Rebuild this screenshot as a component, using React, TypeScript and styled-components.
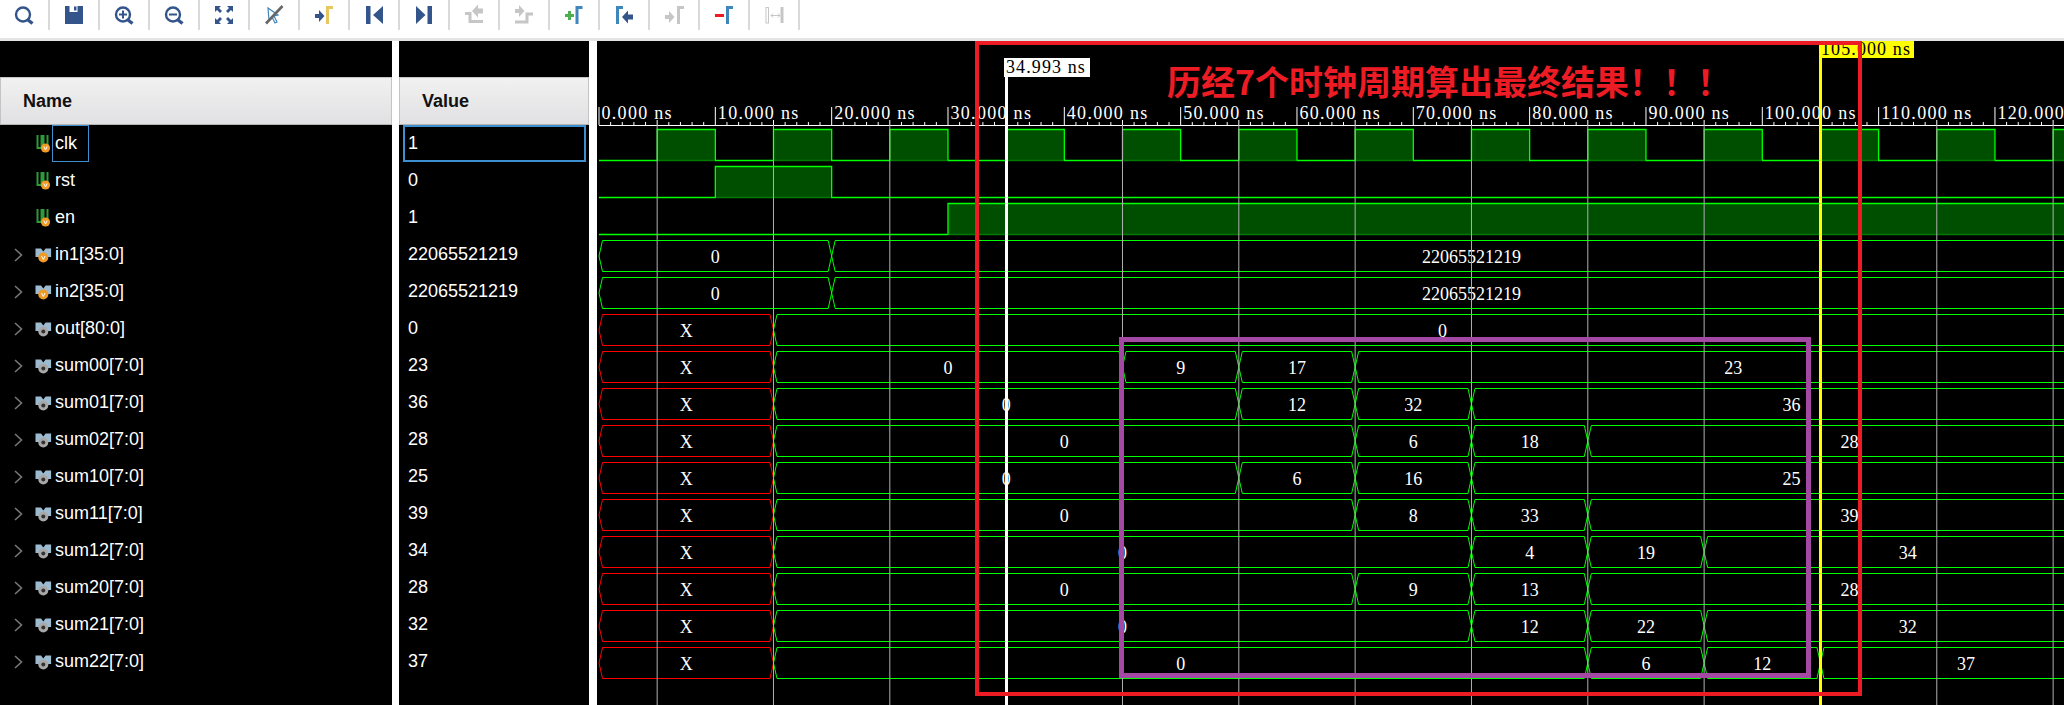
import React from "react";
import styled, { createGlobalStyle } from "styled-components";

const GlobalStyle = createGlobalStyle`
  html, body { margin: 0; padding: 0; background: #000; }
  body { font-family: "Liberation Sans", Arial, sans-serif; }
`;

// waveform geometry, all in page pixels
const PANEL_X = 597;
const PANEL_Y = 41;
const PANEL_W = 1467;
const PANEL_H = 664;
const X0 = 599;
const NS = 11.633;
const ROW_H = 37;
const HIGH_Y = 129.5;
const LOW_Y = 160.5;
const END = 130;
const EDGE = 3.5;

const tx = (t: number) => X0 + t * NS;

type Seg = [number, string];

type Signal = {
  name: string;
  value: string;
  kind: "bit" | "bus" | "grey";
  bits?: [number, number][];
  segs?: Seg[];
};

const clockHighs: [number, number][] = Array.from({ length: 13 }, (_, k) => [5 + k * 10, 10 + k * 10]);

const signals: Signal[] = [
  { name: "clk", value: "1", kind: "bit", bits: clockHighs },
  { name: "rst", value: "0", kind: "bit", bits: [[10, 20]] },
  { name: "en", value: "1", kind: "bit", bits: [[30, END]] },
  { name: "in1[35:0]", value: "22065521219", kind: "bus", segs: [[0, "0"], [20, "22065521219"]] },
  { name: "in2[35:0]", value: "22065521219", kind: "bus", segs: [[0, "0"], [20, "22065521219"]] },
  { name: "out[80:0]", value: "0", kind: "grey", segs: [[0, "X"], [15, "0"]] },
  { name: "sum00[7:0]", value: "23", kind: "grey", segs: [[0, "X"], [15, "0"], [45, "9"], [55, "17"], [65, "23"]] },
  { name: "sum01[7:0]", value: "36", kind: "grey", segs: [[0, "X"], [15, "0"], [55, "12"], [65, "32"], [75, "36"]] },
  { name: "sum02[7:0]", value: "28", kind: "grey", segs: [[0, "X"], [15, "0"], [65, "6"], [75, "18"], [85, "28"]] },
  { name: "sum10[7:0]", value: "25", kind: "grey", segs: [[0, "X"], [15, "0"], [55, "6"], [65, "16"], [75, "25"]] },
  { name: "sum11[7:0]", value: "39", kind: "grey", segs: [[0, "X"], [15, "0"], [65, "8"], [75, "33"], [85, "39"]] },
  { name: "sum12[7:0]", value: "34", kind: "grey", segs: [[0, "X"], [15, "0"], [75, "4"], [85, "19"], [95, "34"]] },
  { name: "sum20[7:0]", value: "28", kind: "grey", segs: [[0, "X"], [15, "0"], [65, "9"], [75, "13"], [85, "28"]] },
  { name: "sum21[7:0]", value: "32", kind: "grey", segs: [[0, "X"], [15, "0"], [75, "12"], [85, "22"], [95, "32"]] },
  { name: "sum22[7:0]", value: "37", kind: "grey", segs: [[0, "X"], [15, "0"], [85, "6"], [95, "12"], [105, "37"]] },
];

const Page = styled.div`
  width: 2064px;
  height: 705px;
  display: flex;
  flex-direction: column;
  overflow: hidden;
  background: #fff;
`;

const Toolbar = styled.div`
  height: 41px;
  box-sizing: border-box;
  display: flex;
  align-items: flex-start;
  background: #fff;
  border-bottom: 3px solid #e4e4e4;
`;

const ToolButton = styled.div`
  width: 50px;
  height: 30px;
  box-sizing: border-box;
  border-right: 2px solid #d9d9d9;
  svg {
    display: block;
  }
`;

const Body = styled.div`
  flex: 1;
  display: flex;
  min-height: 0;
`;

const Column = styled.div<{ $width: number; $gap: number }>`
  width: ${(p) => p.$width}px;
  margin-right: ${(p) => p.$gap}px;
  padding-top: 36px;
  box-sizing: border-box;
  background: #000;
  color: #fff;
  font-size: 18px;
`;

const HeaderCell = styled.div<{ $indent: number }>`
  height: 48px;
  box-sizing: border-box;
  padding-left: ${(p) => p.$indent}px;
  display: flex;
  align-items: center;
  font-weight: bold;
  color: #111;
  background: linear-gradient(#f1f1f1, #e1e1e3);
  border: 1px solid #c4c4c4;
  border-bottom-color: #b4b4b4;
`;

const NameRow = styled.div`
  height: ${ROW_H}px;
  display: grid;
  grid-template-columns: 35px 17px auto;
  justify-content: start;
  align-items: center;
`;

const Chevron = styled.svg`
  margin-left: 14px;
`;

const NameLabel = styled.div<{ $selected?: boolean }>`
  height: ${ROW_H}px;
  box-sizing: border-box;
  padding: 0 11px 0 2px;
  display: flex;
  align-items: center;
  border: 1px solid ${(p) => (p.$selected ? "#3d8fd0" : "transparent")};
`;

const ValueRow = styled.div<{ $selected?: boolean }>`
  height: ${ROW_H}px;
  width: 183px;
  margin-left: 4px;
  box-sizing: border-box;
  padding-left: 3px;
  display: flex;
  align-items: center;
  border: 2px solid ${(p) => (p.$selected ? "#3d8fd0" : "transparent")};
`;

const WavePanel = styled.div`
  position: relative;
  flex: 1;
  background: #000;
  overflow: hidden;
  svg {
    display: block;
  }
`;

const SerifText = styled.text`
  font-family: "Liberation Serif", "Times New Roman", serif;
  font-size: 18px;
  fill: #fff;
`;

const RulerText = styled(SerifText)`
  letter-spacing: 1.3px;
`;

const CursorLine = styled.div<{ $x: number; $top: number; $color: string }>`
  position: absolute;
  left: ${(p) => p.$x - PANEL_X}px;
  top: ${(p) => p.$top - PANEL_Y}px;
  bottom: 0;
  width: 3px;
  background: ${(p) => p.$color};
`;

const CursorTag = styled.div<{ $x: number; $y: number; $w: number; $h: number; $color: string }>`
  position: absolute;
  left: ${(p) => p.$x - PANEL_X}px;
  top: ${(p) => p.$y - PANEL_Y}px;
  width: ${(p) => p.$w}px;
  height: ${(p) => p.$h}px;
  padding-left: 2px;
  box-sizing: border-box;
  background: ${(p) => p.$color};
  color: #000;
  font: 18px/${(p) => p.$h}px "Liberation Serif", serif;
  letter-spacing: 1.1px;
  white-space: nowrap;
`;

const MarkBox = styled.div<{ $l: number; $t: number; $r: number; $b: number; $color: string; $line: number }>`
  position: absolute;
  left: ${(p) => p.$l - PANEL_X}px;
  top: ${(p) => p.$t - PANEL_Y}px;
  width: ${(p) => p.$r - p.$l}px;
  height: ${(p) => p.$b - p.$t}px;
  box-sizing: border-box;
  border: ${(p) => p.$line}px solid ${(p) => p.$color};
`;

const Callout = styled.div`
  position: absolute;
  left: ${1167 - PANEL_X}px;
  top: ${63 - PANEL_Y}px;
  color: #ed1c24;
  font: bold 34px/36px "Noto Sans CJK SC", sans-serif;
  white-space: nowrap;
`;

const BLUE = "#34558b";
const MARK = "#3f86bd";
const GREY = "#c6c6c6";

function Marker({ x, color }: { x: number; color: string }) {
  return <path d={`M${x + 1.5} 24V7.5H${x + 7}`} fill="none" stroke={color} strokeWidth={3} />;
}

function ArrowRight({ x, color, y = 16 }: { x: number; color: string; y?: number }) {
  return <path d={`M${x} ${y - 2}h4v-4l5.5 6-5.5 6v-4h-4z`} fill={color} />;
}

function ArrowLeft({ x, color, y = 17 }: { x: number; color: string; y?: number }) {
  return <path d={`M${x + 11} ${y - 2.5}h-5v-4l-6 6.5 6 6.5v-4h5z`} fill={color} />;
}

function Lens({ sign }: { sign?: "plus" | "minus" }) {
  return (
    <>
      <circle cx={23} cy={14.5} r={7} fill="none" stroke={BLUE} strokeWidth={2.4} />
      <path d="M28 20l4.5 3.5" stroke={BLUE} strokeWidth={3.4} />
      {sign && <path d="M19 14.5h8" stroke={BLUE} strokeWidth={2} />}
      {sign === "plus" && <path d="M23 10.5v8" stroke={BLUE} strokeWidth={2} />}
    </>
  );
}

const toolIcons: React.ReactNode[] = [
  <Lens key="search" />,
  <path key="save" d="M15 6h4.5v6h8V6H33v18H15zM24 6.5h2.5v4H24z" fill={BLUE} fillRule="evenodd" />,
  <Lens key="in" sign="plus" />,
  <Lens key="out" sign="minus" />,
  <g key="fit" fill={BLUE}>
    <path d="M15 6h6l-2 2 3 3-2 2-3-3-2 2zM33 6h-6l2 2-3 3 2 2 3-3 2 2zM15 24h6l-2-2 3-3-2-2-3 3-2-2zM33 24h-6l2-2-3-3 2-2 3 3 2-2z" />
  </g>,
  <g key="cursor">
    <path d="M18 8l10 7-4 1 3 6-2 1-3-6-3 3z" fill="#fff" stroke={MARK} strokeWidth={1.2} />
    <path d="M32.5 6L16 23.5" stroke="#666" strokeWidth={2.6} />
  </g>,
  <g key="goto">
    <ArrowRight x={15} color={BLUE} />
    <Marker x={26} color="#e6c860" />
  </g>,
  <path key="prev" d="M16 6h4.5v18H16zM33 6v18l-10-9z" fill={BLUE} />,
  <path key="next" d="M16 6v18l9.5-9zM27.5 6H32v18h-4.5z" fill={BLUE} />,
  <g key="ptrans">
    <path d="M15 13.5h5v8h13" fill="none" stroke={GREY} strokeWidth={3} />
    <ArrowLeft x={22} color={GREY} y={11} />
  </g>,
  <g key="ntrans">
    <path d="M15 22h12v-8h6" fill="none" stroke={GREY} strokeWidth={3} />
    <ArrowRight x={15} color={GREY} y={11} />
  </g>,
  <g key="add">
    <path d="M15 15.5h9M19.5 11v9" stroke="#4caf50" strokeWidth={3} />
    <Marker x={25.5} color={MARK} />
  </g>,
  <g key="pmark">
    <Marker x={16} color={MARK} />
    <ArrowLeft x={22} color={BLUE} />
  </g>,
  <g key="nmark">
    <ArrowRight x={15} color={GREY} y={17} />
    <Marker x={27} color={GREY} />
  </g>,
  <g key="del">
    <path d="M15 15.5h9" stroke="#ed1c24" strokeWidth={3} />
    <Marker x={26} color={MARK} />
  </g>,
  <g key="swap">
    <rect x={16} y={7.5} width={2.5} height={15.5} fill="none" stroke={GREY} strokeWidth={1} />
    <path d="M21 15.5h9M23 13.5l-2 2 2 2M28 13.5l2 2-2 2" fill="none" stroke={GREY} strokeWidth={1} />
    <path d="M30.5 7h3v16h-3z" fill={GREY} />
  </g>,
];

function ScalarIcon() {
  return (
    <svg width={17} height={20} viewBox="0 0 17 20">
      <path d="M2.5 1v13h4V1M8.5 1v10h4V1" fill="none" stroke="#2e9a3a" strokeWidth={2} />
      <circle cx={10.5} cy={14} r={4.6} fill="#f19a26" />
      <path d="M8.8 12.5l1.7 3.5 1.7-3.5" fill="none" stroke="#fff" strokeWidth={1} />
    </svg>
  );
}

function BusIcon({ grey }: { grey: boolean }) {
  return (
    <svg width={17} height={16} viewBox="0 0 17 16">
      <path d="M0.5 1.5h5.5l2.3 3 2.3-3h5.5v8.5h-5.5v1h-4.6v-1h-5.5z" fill="#9dbbd0" />
      <circle cx={8.3} cy={10.5} r={5} fill={grey ? "#a8a8a8" : "#f19a26"} />
      {grey ? (
        <circle cx={8.3} cy={10.5} r={2} fill="#333" />
      ) : (
        <path d="M6.5 9l1.8 3.6 1.8-3.6" fill="none" stroke="#fff" strokeWidth={1} />
      )}
    </svg>
  );
}

function BitWave({ row, bits }: { row: number; bits: [number, number][] }) {
  const high = HIGH_Y + row * ROW_H;
  const low = LOW_Y + row * ROW_H;
  let d = `M${X0} ${low}`;
  bits.forEach(([a, b]) => {
    d += `H${tx(a)}V${high}H${tx(b)}V${low}`;
  });
  d += `H${tx(END)}`;
  return (
    <>
      {bits.map(([a, b]) => (
        <rect key={a} x={tx(a)} y={high} width={tx(b) - tx(a)} height={low - high} fill="#004f00" />
      ))}
      <path d={d} fill="none" stroke="#00ff00" strokeWidth={1.3} />
      {bits.map(([a, b]) => (
        <path key={a} d={`M${tx(a) + 1} ${low}H${tx(b) - 1}`} stroke="#007a00" strokeWidth={1.3} />
      ))}
    </>
  );
}

function BusWave({ row, segs }: { row: number; segs: Seg[] }) {
  const top = HIGH_Y + row * ROW_H;
  const bottom = LOW_Y + row * ROW_H;
  const mid = (top + bottom) / 2;
  return (
    <>
      {segs.map(([start, label], i) => {
        const stop = i + 1 < segs.length ? segs[i + 1][0] : END;
        const a = tx(start);
        const b = tx(stop);
        const points = `${a},${mid} ${a + EDGE},${top} ${b - EDGE},${top} ${b},${mid} ${b - EDGE},${bottom} ${a + EDGE},${bottom}`;
        return (
          <polygon key={start} points={points} fill="none" stroke={label === "X" ? "#ff0000" : "#00ff00"} strokeWidth={1} />
        );
      })}
      {segs.map(([start, label], i) => {
        const stop = i + 1 < segs.length ? segs[i + 1][0] : END;
        return (
          <SerifText key={start} x={tx((start + stop) / 2)} y={top + 22.5} textAnchor="middle">
            {label}
          </SerifText>
        );
      })}
    </>
  );
}

function Ruler() {
  let minor = "";
  for (let t = 0; t <= 125; t += 1) {
    const h = t % 10 === 0 ? 18 : t % 5 === 0 ? 5 : 3;
    minor += `M${tx(t)} 125v-${h}`;
  }
  return (
    <>
      <path d={`${minor}M${X0} 125.5H${PANEL_X + PANEL_W}`} stroke="#fff" strokeWidth={1} fill="none" />
      {Array.from({ length: 13 }, (_, k) => (
        <RulerText key={k} x={tx(k * 10) + 2.5} y={119}>
          {`${k * 10}.000 ns`}
        </RulerText>
      ))}
    </>
  );
}

function Waveform() {
  const gridLines = Array.from({ length: 13 }, (_, k) => tx(5 + k * 10));
  return (
    <svg width={PANEL_W} height={PANEL_H} viewBox={`${PANEL_X} ${PANEL_Y} ${PANEL_W} ${PANEL_H}`}>
      <Ruler />
      {signals.map((s, i) =>
        s.bits ? <BitWave key={s.name} row={i} bits={s.bits} /> : <BusWave key={s.name} row={i} segs={s.segs ?? []} />
      )}
      {gridLines.map((x) => (
        <path key={x} d={`M${x} 125V705`} stroke="#b0b0b0" strokeWidth={1} />
      ))}
    </svg>
  );
}

export default function App() {
  return (
    <Page>
      <GlobalStyle />
      <Toolbar>
        {toolIcons.map((icon, i) => (
          <ToolButton key={i}>
            <svg width={50} height={30} viewBox="0 0 50 30">
              {icon}
            </svg>
          </ToolButton>
        ))}
      </Toolbar>
      <Body>
        <Column $width={392} $gap={7}>
          <HeaderCell $indent={22}>Name</HeaderCell>
          {signals.map((s, i) => (
            <NameRow key={s.name}>
              {s.kind === "bit" ? (
                <span />
              ) : (
                <Chevron width={9} height={14} viewBox="0 0 9 14">
                  <path d="M1 1l6.5 6L1 13" fill="none" stroke="#777" strokeWidth={1.6} />
                </Chevron>
              )}
              {s.kind === "bit" ? <ScalarIcon /> : <BusIcon grey={s.kind === "grey"} />}
              <NameLabel $selected={i === 0}>{s.name}</NameLabel>
            </NameRow>
          ))}
        </Column>
        <Column $width={190} $gap={8}>
          <HeaderCell $indent={22}>Value</HeaderCell>
          {signals.map((s, i) => (
            <ValueRow key={s.name} $selected={i === 0}>
              {s.value}
            </ValueRow>
          ))}
        </Column>
        <WavePanel>
          <Waveform />
          <CursorLine $x={1005} $top={77} $color="#fff" />
          <CursorTag $x={1004} $y={58} $w={86} $h={19} $color="#fff">
            34.993 ns
          </CursorTag>
          <CursorLine $x={1819} $top={57} $color="#ffff00" />
          <CursorTag $x={1819} $y={41} $w={95} $h={17} $color="#ffff00">
            105.000 ns
          </CursorTag>
          <MarkBox $l={1119} $t={337} $r={1811} $b={678} $color="#a349a4" $line={5} />
          <MarkBox $l={975} $t={41} $r={1862} $b={696} $color="#ed1c24" $line={4} />
          <Callout>历经7个时钟周期算出最终结果！！！</Callout>
        </WavePanel>
      </Body>
    </Page>
  );
}
